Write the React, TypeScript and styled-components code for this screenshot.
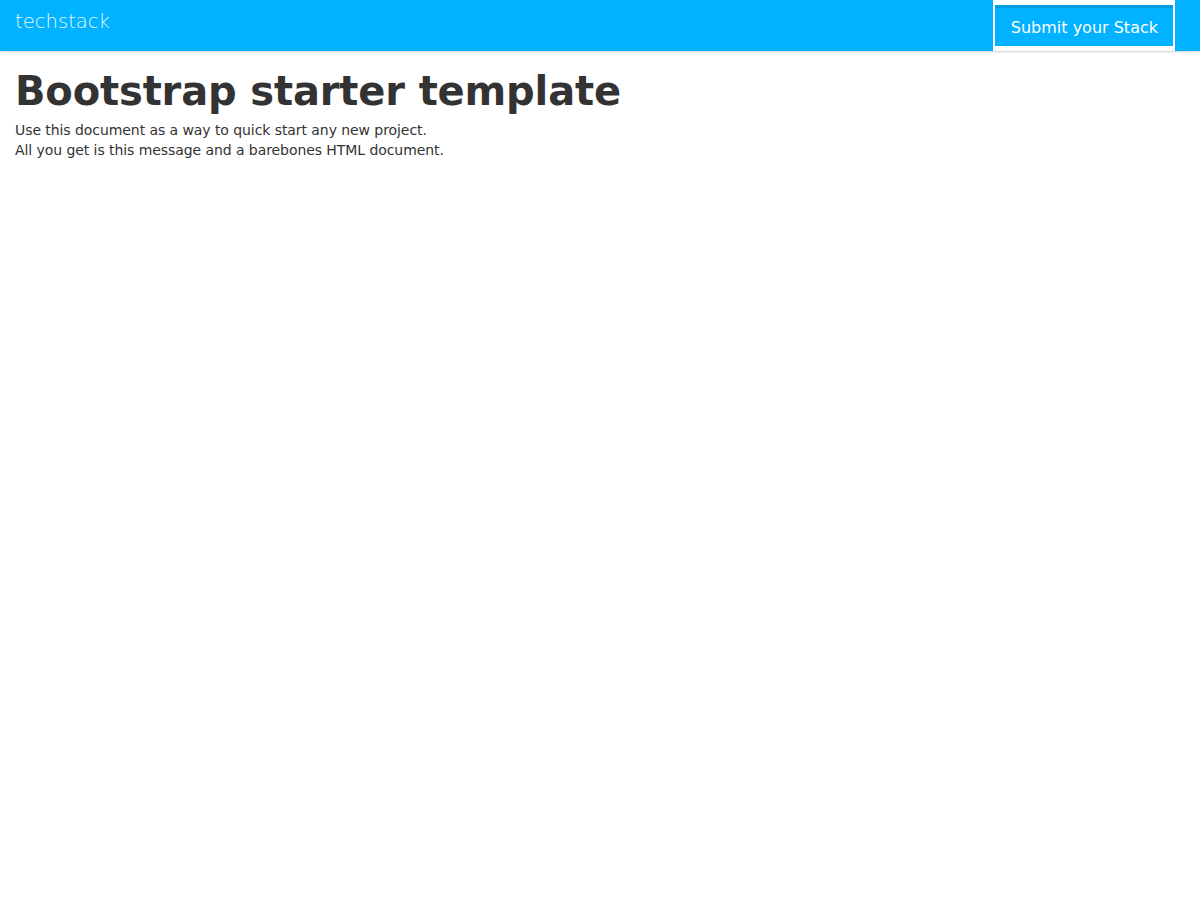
import styled, { createGlobalStyle } from "styled-components";

const GlobalStyle = createGlobalStyle`
  html, body {
    margin: 0;
    padding: 0;
    background: #fff;
  }
  body {
    font-family: "DejaVu Sans", "Helvetica Neue", Helvetica, Arial, sans-serif;
    font-size: 14px;
    line-height: 20px;
    color: #333;
  }
`;

const SNavbar = styled.nav`
  display: flex;
  justify-content: space-between;
  align-items: stretch;
  height: 51px;
  padding: 0 25px 0 15px;
  background: #00b2ff;
  border-bottom: 1px solid #dcdcdc;
  box-shadow: 0 1px 2px rgba(0, 0, 0, 0.08);
`;

const SBrand = styled.a`
  padding-top: 10px;
  font-size: 19.6px;
  font-weight: 200;
  line-height: 24px;
  color: #e8f7ff;
  text-decoration: none;
`;

const SButtonFrame = styled.div`
  display: flex;
  align-items: flex-start;
  padding: 5px 2px 0;
  background: #fff;
`;

const SSubmitButton = styled.button`
  height: 41px;
  padding: 0 15px 0 16px;
  border: none;
  border-top: 3px solid #009edf;
  background: #00b2ff;
  color: #fff;
  font-family: "DejaVu Sans", sans-serif;
  font-size: 16px;
  cursor: pointer;
`;

const SContainer = styled.main`
  padding: 0 15px;
`;

const STitle = styled.h1`
  margin: 18px 0 8px;
  font-size: 40px;
  font-weight: bold;
  line-height: 42px;
  letter-spacing: -0.15px;
  color: #333;
`;

const SLead = styled.p`
  margin: 0;
  font-size: 14px;
  line-height: 20px;
  letter-spacing: -0.07px;
`;

export default function App() {
  return (
    <>
      <GlobalStyle />
      <SNavbar>
        <SBrand href="#">techstack</SBrand>
        <SButtonFrame>
          <SSubmitButton>Submit your Stack</SSubmitButton>
        </SButtonFrame>
      </SNavbar>
      <SContainer>
        <STitle>Bootstrap starter template</STitle>
        <SLead>
          Use this document as a way to quick start any new project.
          <br />
          All you get is this message and a barebones HTML document.
        </SLead>
      </SContainer>
    </>
  );
}
